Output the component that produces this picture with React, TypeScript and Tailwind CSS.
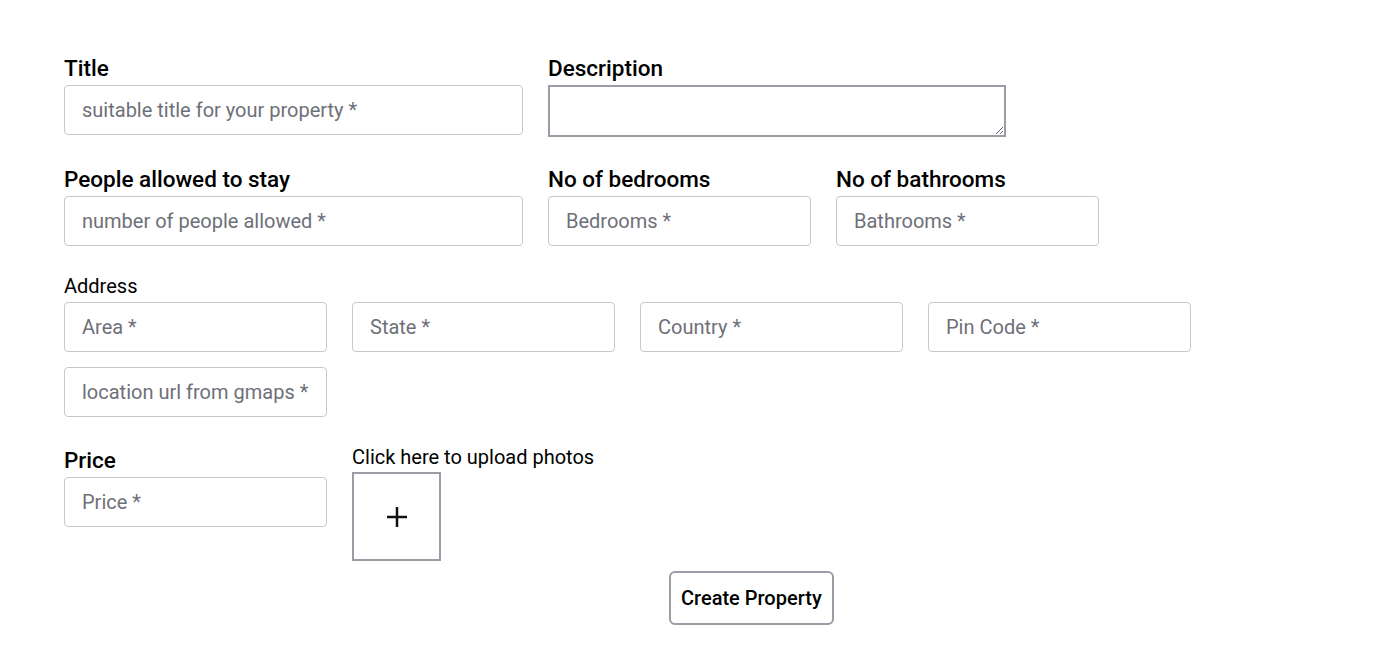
import React from 'react'

const inputCls =
  'h-[50px] rounded-[4px] border border-[#c8c8c8] bg-white pl-[17px] pr-[8px] text-[20px] text-gray-900 outline-none placeholder:text-[#6e7079]'

const labelCls = 'mb-[5px] text-[22.5px] font-medium leading-[24px] text-black'

function Field({ label, placeholder, width }: { label: string; placeholder: string; width: string }) {
  return (
    <div className="flex flex-col">
      <label className={labelCls}>{label}</label>
      <input className={`${inputCls} ${width}`} placeholder={placeholder} />
    </div>
  )
}

export default function App() {
  return (
    <div className="min-h-screen bg-white pl-[64px] pt-[56px]" style={{ fontFamily: 'Roboto, "Noto Sans", sans-serif' }}>
      {/* Title + Description */}
      <div className="flex items-start gap-[25px]">
        <Field label="Title" placeholder="suitable title for your property *" width="w-[459px]" />
        <div className="flex flex-col">
          <label className={labelCls}>Description</label>
          <textarea className="h-[52px] w-[458px] border-2 border-[#9a9da5] bg-white outline-none" />
        </div>
      </div>

      {/* People / bedrooms / bathrooms */}
      <div className="mt-[30px] flex items-start gap-[25px]">
        <Field label="People allowed to stay" placeholder="number of people allowed *" width="w-[459px]" />
        <Field label="No of bedrooms" placeholder="Bedrooms *" width="w-[263px]" />
        <Field label="No of bathrooms" placeholder="Bathrooms *" width="w-[263px]" />
      </div>

      {/* Address */}
      <div className="mt-[30px]">
        <div className="mb-[6px] text-[20px] leading-[20px] text-black">Address</div>
        <div className="flex w-[1200px] flex-wrap gap-x-[25px] gap-y-[15px]">
          {['Area *', 'State *', 'Country *', 'Pin Code *', 'location url from gmaps *'].map((p) => (
            <input key={p} className={`${inputCls} w-[263px]`} placeholder={p} />
          ))}
        </div>
      </div>

      {/* Price + photos */}
      <div className="mt-[28px] flex items-start gap-[25px]">
        <div className="flex flex-col pt-[3px]">
          <label className={labelCls}>Price</label>
          <input className={`${inputCls} w-[263px]`} placeholder="Price *" />
        </div>
        <div className="flex flex-col">
          <div className="mb-[3px] text-[20px] leading-[24px] text-black">Click here to upload photos</div>
          <button className="flex h-[89px] w-[89px] items-center justify-center border-2 border-[#9a9da5] bg-white">
            <svg width="22" height="22" viewBox="0 0 22 22" fill="none" stroke="#111" strokeWidth="2.5">
              <path d="M11 1v20M1 11h20" />
            </svg>
          </button>
        </div>
      </div>

      {/* Submit */}
      <div className="mt-[10px] flex pl-[605px]">
        <button className="h-[54px] rounded-[6px] border-2 border-[#9a9da5] bg-white px-[10px] text-[20px] font-medium text-black">
          Create Property
        </button>
      </div>
    </div>
  )
}
